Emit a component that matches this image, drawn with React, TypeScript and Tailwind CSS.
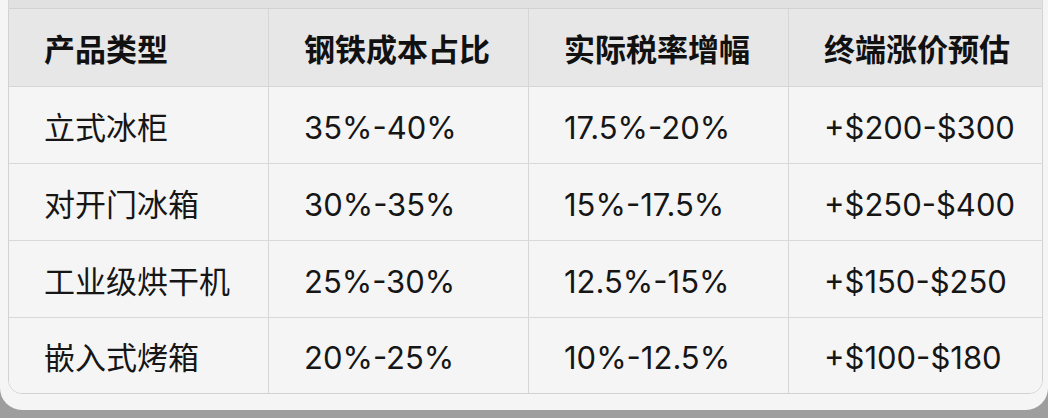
const FONT = "font-['Inter','Noto_Sans_CJK_SC',sans-serif]";

const HEADERS = ["产品类型", "钢铁成本占比", "实际税率增幅", "终端涨价预估"];

const ROWS: string[][] = [
  ["立式冰柜", "35%-40%", "17.5%-20%", "+$200-$300"],
  ["对开门冰箱", "30%-35%", "15%-17.5%", "+$250-$400"],
  ["工业级烘干机", "25%-30%", "12.5%-15%", "+$150-$250"],
  ["嵌入式烤箱", "20%-25%", "10%-12.5%", "+$100-$180"],
];

// ── Cells ────────────────────────────────────────────────────────────────────

function Cell({ text, head, last }: { text: string; head?: boolean; last?: boolean }) {
  return (
    <div
      className={`flex items-center pl-[35px] pt-[4px] ${last ? "" : "border-r border-[#d6d6d6]"} ${
        head ? "font-semibold text-[#111]" : "font-normal text-[#161616]"
      }`}
    >
      {text}
    </div>
  );
}

export default function App() {
  return (
    <div className={`w-[1048px] h-[418px] bg-[#9e9e9e] overflow-hidden ${FONT}`}>
      <div className="h-[410px] bg-[#f5f5f5] rounded-b-[22px] px-[8px]">
        {/* strip of the row above, cut off */}
        <div className="h-[8px] w-[1035px] bg-[#e1e1e1] border-x border-[#d6d6d6]" />

        <div className="w-[1035px] border border-[#d2d2d2] rounded-b-[14px] overflow-hidden text-[31px] leading-none">
          <div className="grid grid-cols-[260px_260px_260px_1fr] h-[78px] bg-[#e7e7e7] border-b border-[#d6d6d6]">
            {HEADERS.map((h, i) => (
              <Cell key={h} text={h} head last={i === HEADERS.length - 1} />
            ))}
          </div>

          {ROWS.map((r, ri) => (
            <div
              key={r[0]}
              className={`grid grid-cols-[260px_260px_260px_1fr] bg-[#f5f5f5] ${
                ri < ROWS.length - 1 ? "h-[77px] border-b border-[#d9d9d9]" : "h-[75px]"
              }`}
            >
              {r.map((c, ci) => (
                <Cell key={ci} text={c} last={ci === r.length - 1} />
              ))}
            </div>
          ))}
        </div>
      </div>
    </div>
  );
}
